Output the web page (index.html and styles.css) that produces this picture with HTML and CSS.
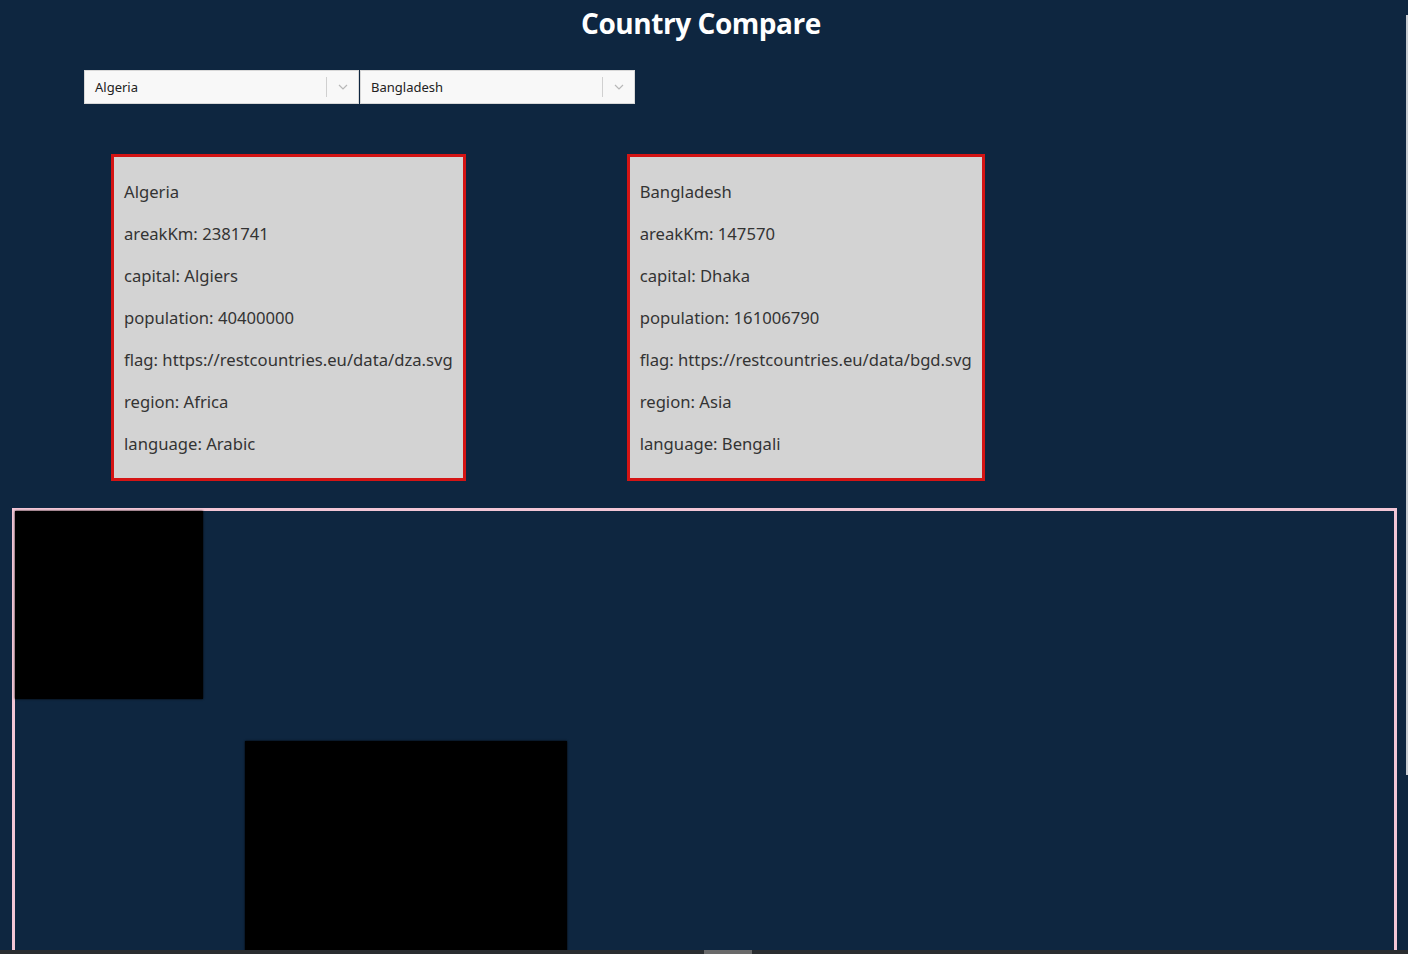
FILE: index.html
```html
<!DOCTYPE html>
<html lang="en">
<head>
<meta charset="utf-8">
<title>Country Compare</title>
<link rel="stylesheet" href="styles.css">
</head>
<body>
<div class="page">
  <h1 class="title">Country Compare</h1>
  <div class="selects">
    <div class="select">
      <span class="select-value">Algeria</span>
      <span class="select-sep"></span>
      <svg class="chev" width="10" height="6" viewBox="0 0 10 6"><path d="M1 1 L5 5 L9 1" fill="none" stroke="#b8b8b8" stroke-width="1.2"/></svg>
    </div>
    <div class="select">
      <span class="select-value">Bangladesh</span>
      <span class="select-sep"></span>
      <svg class="chev" width="10" height="6" viewBox="0 0 10 6"><path d="M1 1 L5 5 L9 1" fill="none" stroke="#b8b8b8" stroke-width="1.2"/></svg>
    </div>
  </div>
  <div class="cards">
    <div class="card">
      <p>Algeria</p>
      <p>areakKm: 2381741</p>
      <p>capital: Algiers</p>
      <p>population: 40400000</p>
      <p>flag: https://restcountries.eu/data/dza.svg</p>
      <p>region: Africa</p>
      <p>language: Arabic</p>
    </div>
    <div class="card">
      <p>Bangladesh</p>
      <p>areakKm: 147570</p>
      <p>capital: Dhaka</p>
      <p>population: 161006790</p>
      <p>flag: https://restcountries.eu/data/bgd.svg</p>
      <p>region: Asia</p>
      <p>language: Bengali</p>
    </div>
  </div>
  <div class="canvas">
    <div class="block block-a"></div>
    <div class="block block-b"></div>
  </div>
</div>
<div class="vscroll"></div>
<div class="hscroll"><div class="hthumb"></div></div>
</body>
</html>
```
FILE: styles.css
```css
html, body {
  margin: 0;
  padding: 0;
  height: 100%;
  overflow: hidden;
}
body {
  background: #0e2640;
  font-family: "Noto Sans", "Open Sans", sans-serif;
  color: #333;
}
.page {
  display: flex;
  flex-direction: column;
}
.title {
  margin: 4px 0 0;
  padding: 0 6px 2px 0;
  text-align: center;
  color: #fff;
  font-family: "Open Sans", sans-serif;
  font-weight: 700;
  font-size: 28px;
  line-height: 38px;
  letter-spacing: -0.45px;
}
.selects {
  display: flex;
  gap: 1px;
  margin: 26px 0 0 84px;
}
.select {
  width: 273px;
  height: 32px;
  background: #f8f8f8;
  border: 1px solid #d8d8d8;
  display: flex;
  align-items: center;
  font-size: 13px;
  color: #222;
}
.select-value {
  flex: 1;
  padding-left: 10px;
}
.select-sep {
  width: 1px;
  height: 20px;
  background: #d0d0d0;
}
.chev {
  margin: 0 10px 0 11px;
}
.cards {
  display: flex;
  gap: 161px;
  margin: 50px 0 0 111px;
}
.card {
  background: #d3d3d3;
  border: 3px solid #d41414;
  padding: 5px 10px 4px 10px;
  font-size: 16.65px;
  color: #333;
}
.card p {
  margin: 18px 0;
  line-height: 24px;
}
.canvas {
  position: relative;
  margin: 27px 11px 0 12px;
  height: 520px;
  border: 3px solid #f2c6d6;
  border-bottom: none;
}
.block {
  position: absolute;
  background: #000;
  box-shadow: 0 0 2px #000;
}
.block-a {
  left: 0;
  top: 0;
  width: 188px;
  height: 188px;
}
.block-b {
  left: 230px;
  top: 230px;
  width: 322px;
  height: 322px;
}
.vscroll {
  position: fixed;
  right: 0;
  top: 15px;
  width: 2px;
  height: 760px;
  background: #c8ccd2;
}
.hscroll {
  position: fixed;
  left: 0;
  right: 0;
  bottom: 0;
  height: 4px;
  background: #2a2d30;
}
.hthumb {
  position: absolute;
  left: 704px;
  top: 0;
  width: 48px;
  height: 4px;
  background: #6a6a6a;
}
```
